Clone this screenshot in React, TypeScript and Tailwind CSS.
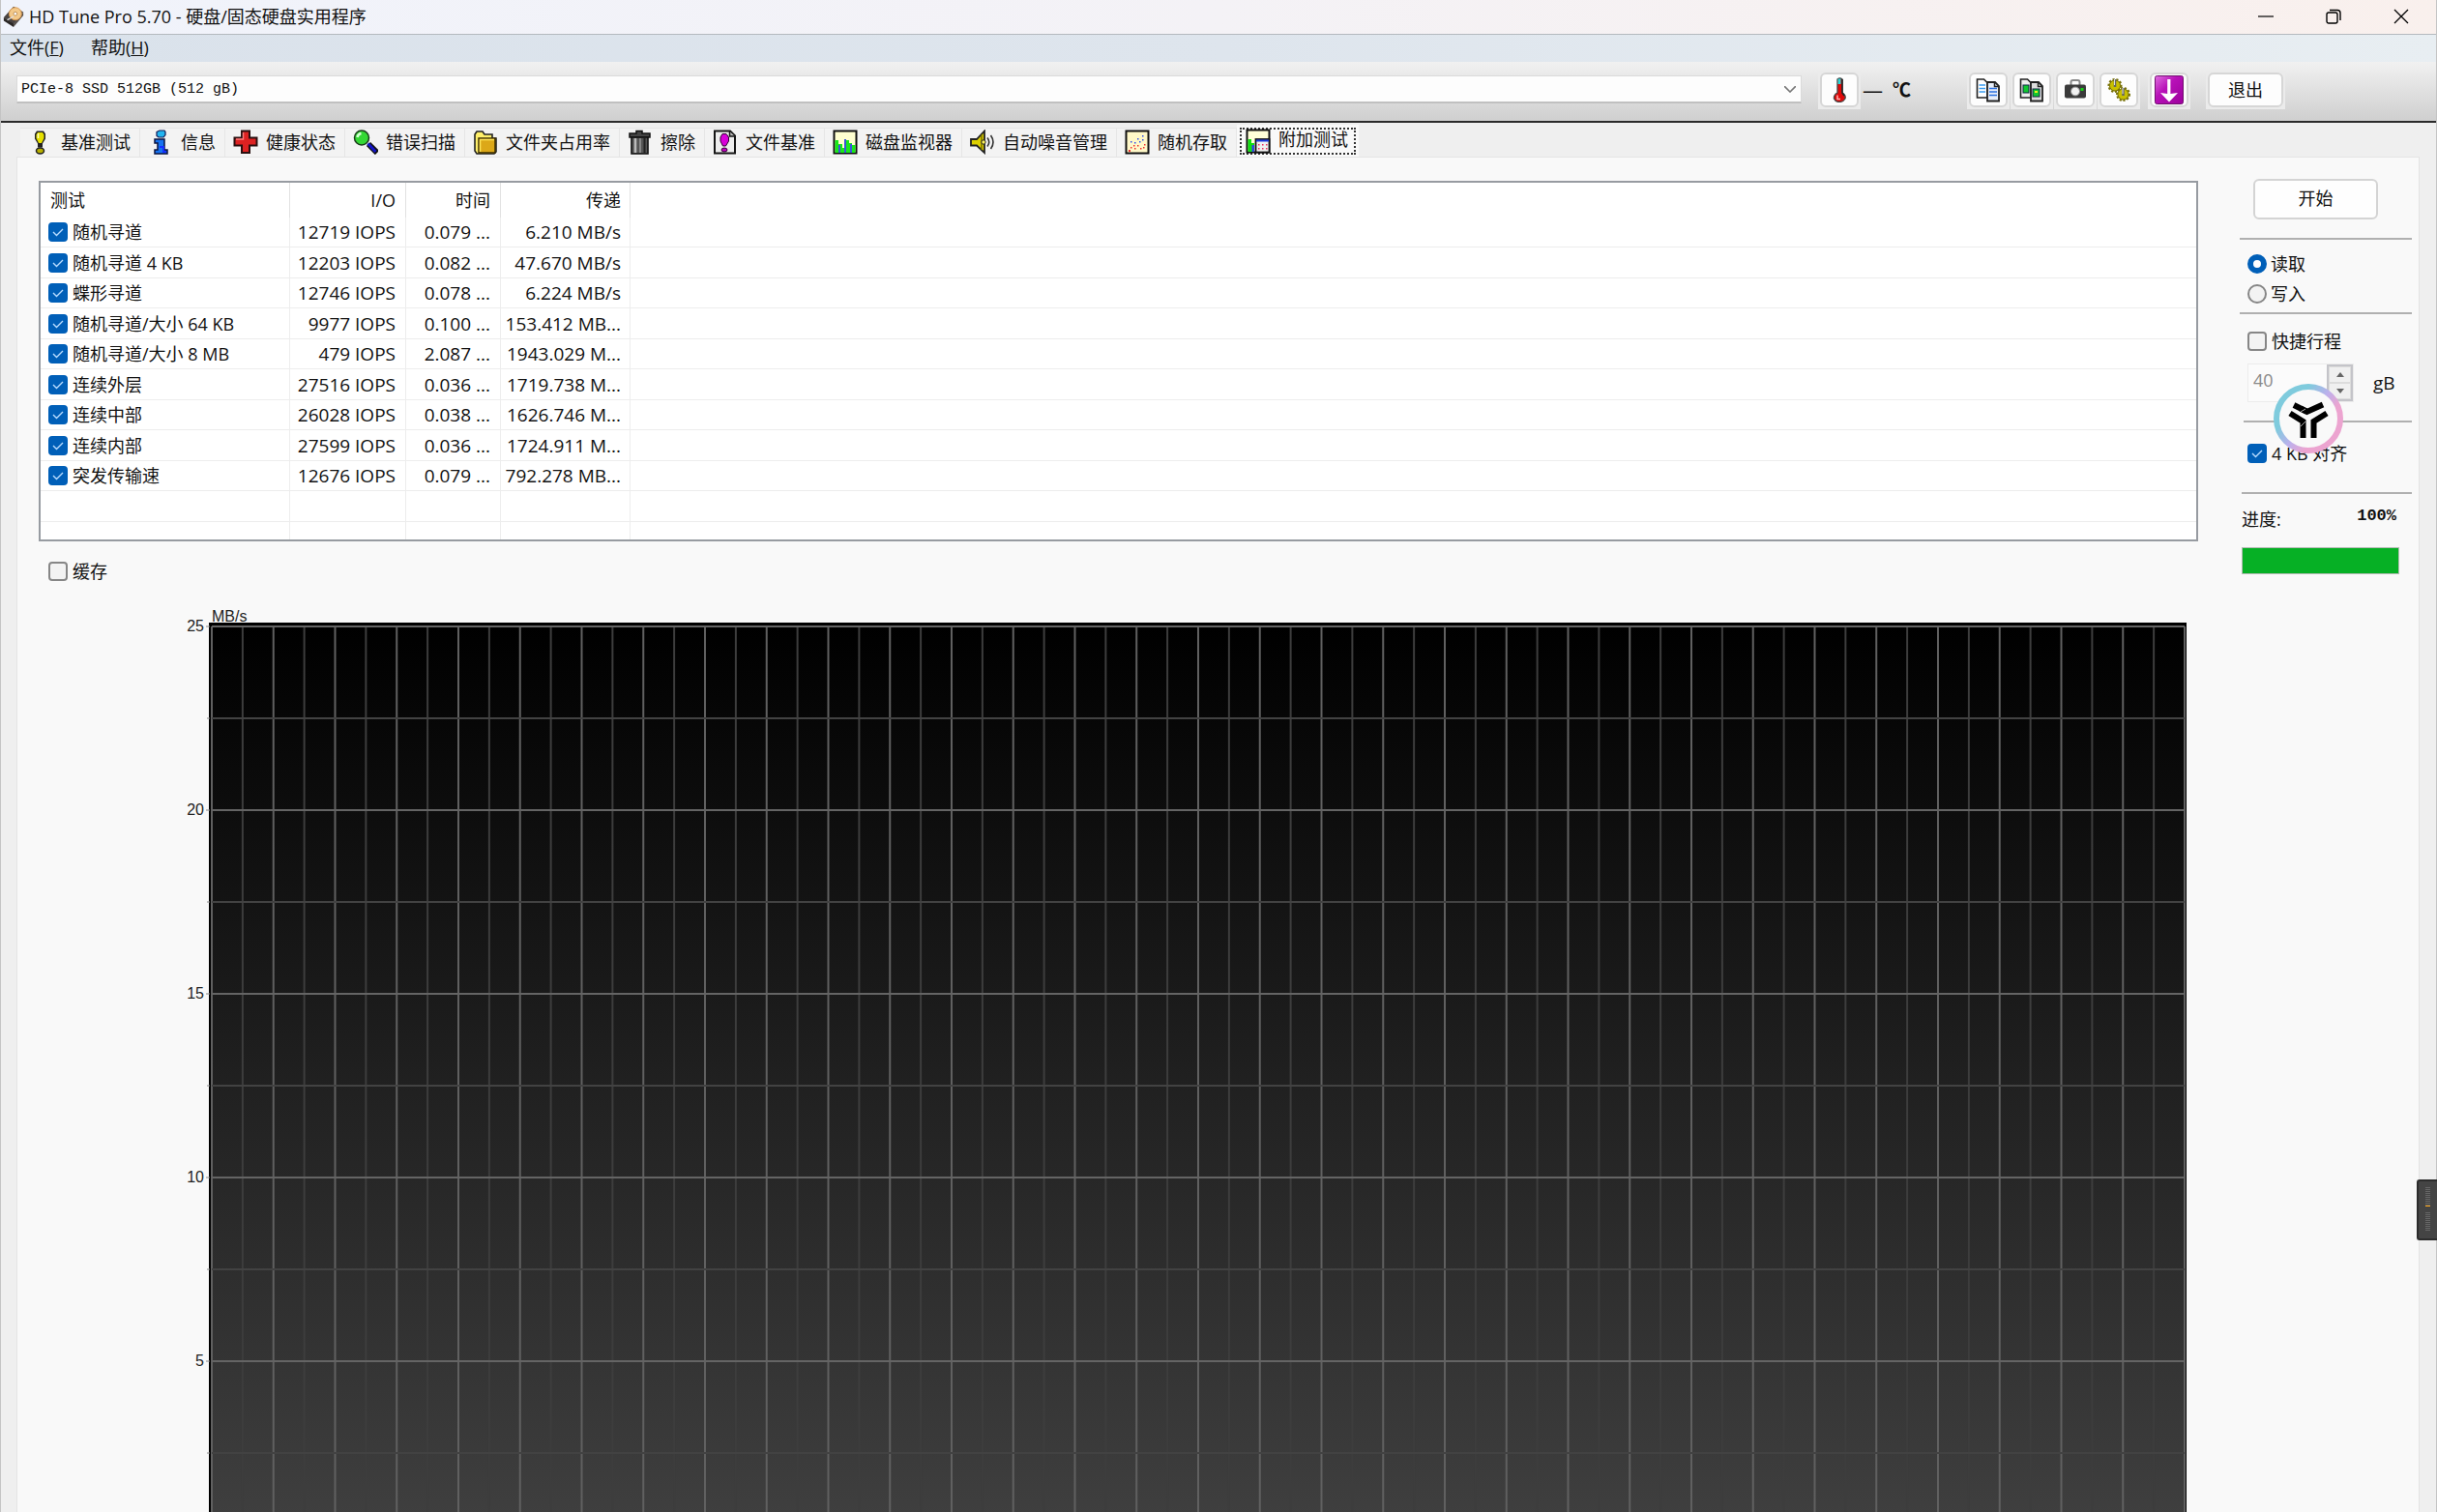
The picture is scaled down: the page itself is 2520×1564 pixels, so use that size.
import React from "react";

type IconProps = { children: React.ReactNode; size?: string };
const Icon = ({ children, size = "size-[26px]" }: IconProps) => (
  <svg viewBox="0 0 26 26" className={`${size} shrink-0`} aria-hidden="true">
    {children}
  </svg>
);

const AppIcon = () => (
  <Icon size="size-[24px]">
    <path d="M2 14 13 2l11 6-11 14z" fill="#4a4442" />
    <path d="M2 14v4l11 7V21z" fill="#2b2725" />
    <path d="m13 21 11-13v4L13 25z" fill="#57504c" />
    <ellipse cx="15" cy="10" rx="7" ry="7" fill="#f3c98a" stroke="#d8954a" />
    <circle cx="15" cy="10" r="2" fill="#fff" stroke="#b98a52" />
    <path d="M6 17l7-4" stroke="#ddd" strokeWidth="1.5" />
  </Icon>
);
const BenchIcon = () => (
  <Icon>
    <path d="M9 1.500h7l2 3v5l-3 5v4h-5v-4l-3-5v-5z" fill="#222" />
    <path d="M10 3h5l1.500 2.500V9L14 14h-3L8.500 9V5.500z" fill="#e6e000" />
    <path d="M10.500 4v5" stroke="#ffffc0" strokeWidth="1.500" />
    <ellipse cx="12.500" cy="22" rx="4" ry="3" fill="#b8b000" stroke="#222" strokeWidth="1.500" />
  </Icon>
);
const InfoIcon = () => (
  <Icon>
    <path d="M9 2.500 12 1h5l1 1.500v3L16 8h-5L9 6.500z" fill="#22b4f0" stroke="#111a55" strokeWidth="1.200" />
    <path d="M7 10h10v11h3v4H7v-4h3v-7H7z" fill="#1672f0" stroke="#0a1340" strokeWidth="1.500" />
    <path d="M12 18h4v5h3" fill="none" stroke="#1530ff" strokeWidth="2" />
  </Icon>
);
const HealthIcon = () => (
  <Icon>
    <path d="M9 1.500h8v7h7.500v8H17V24H9v-7.500H1.500v-8H9z" fill="#dd2222" stroke="#2a1010" strokeWidth="2" />
    <path d="M10.500 3v7H3" fill="none" stroke="#ff7a7a" strokeWidth="1.500" />
  </Icon>
);
const ScanIcon = () => (
  <Icon>
    <path d="m16 15 9 9" stroke="#111" strokeWidth="6" />
    <path d="m15.500 14.500 8 8.500" stroke="#1414c8" strokeWidth="3" />
    <circle cx="9" cy="8.500" r="7.500" fill="#35d835" stroke="#1b3d1b" strokeWidth="1.500" />
    <path d="M4.500 8a5 5 0 0 1 4-4" stroke="#d5ffd5" strokeWidth="2.500" fill="none" />
  </Icon>
);
const FolderIcon = () => (
  <Icon>
    <path d="M2 5 4 2h6l2 3h8v4h4v14l-2 2H4l-2-3z" fill="#fff06a" stroke="#222" strokeWidth="1.600" />
    <rect x="6" y="9" width="17" height="15" fill="#dca818" stroke="#3a2c00" strokeWidth="1.500" />
    <path d="M7.500 23V10.500H22" fill="none" stroke="#ffe55a" strokeWidth="1.500" />
  </Icon>
);
const TrashIcon = () => (
  <Icon>
    <path d="M2 4h7V1.500h6V4h8v4H2z" fill="#444" stroke="#111" strokeWidth="1.500" />
    <path d="M4 8h17v17H4z" fill="#555" stroke="#111" strokeWidth="1.600" />
    <path d="M8 9v15" stroke="#bbb" strokeWidth="2.500" />
    <path d="M13 9v15" stroke="#888" strokeWidth="2" />
    <path d="M17.500 9v15" stroke="#222" strokeWidth="2" />
  </Icon>
);
const FileBenchIcon = () => (
  <Icon>
    <path d="M2 1.500h16l5 5V24.500H2z" fill="#eee" stroke="#151515" strokeWidth="2" />
    <path d="M17.500 2v5H23" fill="#bbb" stroke="#151515" strokeWidth="1.500" />
    <path d="M10 4.500h4l2.500 3.500v4L13.500 17h-3L8 12V8z" fill="#d800d8" stroke="#300030" />
    <ellipse cx="12" cy="21" rx="3" ry="2" fill="#c000c0" stroke="#300030" />
  </Icon>
);
const MonitorIcon = () => (
  <Icon>
    <rect x="1.500" y="1.500" width="23" height="23" fill="#ffffd0" stroke="#111" strokeWidth="2" />
    <path d="M2.500 24V11H6v4h4v4h2v-8h5v3h3v2h3.500v8z" fill="#18e818" />
    <path d="M6 24v-8h2v8zM12 24V10h2v14zM18 24v-9h2v9z" fill="#3a55d8" />
  </Icon>
);
const SpeakerIcon = () => (
  <Icon>
    <path d="M1 10h6l8-8.500V24l-8-7.500H1z" fill="#ddd000" stroke="#222" strokeWidth="1.800" />
    <path d="M12 5v16" stroke="#777000" strokeWidth="1.500" />
    <circle cx="14" cy="13" r="2.200" fill="#fff45a" stroke="#222" />
    <path d="M18 8.500q3.500 4.500 0 9M21.500 6q5 7 0 14" fill="none" stroke="#333" strokeWidth="1.600" />
  </Icon>
);
const RandomIcon = () => (
  <Icon>
    <rect x="1.500" y="1.500" width="23" height="23" fill="#fff8c8" stroke="#111" strokeWidth="2" />
    <path d="M6 12h1.500v1.500H6zM10 13h1.500v1.500H10zM13 9h1.500v1.500H13zM18 6h1.500v1.500H18zM15 12h1.500v1.500H15zM18 10h1.500v1.500H18z" fill="#3050e8" />
    <path d="M4 21h2v2H4zM6 18h1.500v1.500H6zM10 19h1.500v1.500H10zM13 16h1.500v1.500H13zM16 19h1.500v1.500H16zM20 15h1.500v1.500H20zM19 18h1.500v1.500H19zM9 16h1.500v1.500H9z" fill="#f03030" />
  </Icon>
);
const ExtraIcon = () => (
  <Icon>
    <rect x="1.500" y="1.500" width="23" height="23" fill="#ffffd8" stroke="#111" strokeWidth="2" />
    <path d="M2.500 24V11H6v4h3v9z" fill="#10e010" />
    <path d="M6.500 24v-7H9v7z" fill="#3048e0" />
    <rect x="10.500" y="11" width="14" height="13.500" fill="#f0f0f0" stroke="#111" strokeWidth="1.800" />
    <path d="M11 12.500h13" stroke="#1838e0" strokeWidth="2" />
    <path d="M13 16h1.500v1.500H13zM17 16h1.500v1.500H17zM21 16h1.500v1.500H21zM13 20h1.500v1.500H13zM17 20h1.500v1.500H17zM21 20h1.500v1.500H21z" fill="#e83060" />
  </Icon>
);

const ThermoIcon = () => (
  <Icon>
    <path d="M11 2q2.500-2 5 0v14q4 2 3 6-2 3.500-6 3.500T7.500 22q-.500-4 3.500-6z" fill="#e00808" stroke="#444" strokeWidth="1.300" />
    <path d="M11.500 1.500h3V7h-3z" fill="#28d8d8" />
    <path d="M16 2v14l2 3" stroke="#222" strokeWidth="1.500" fill="none" />
    <path d="M11 18.500v4h3" stroke="#ffb0b0" strokeWidth="1.500" fill="none" />
  </Icon>
);
const pagePath = "M1.500 2h7l3.500 3.500V21H1.500z";
const pagePath2 = "M12 5h8l4 4v15.500H12z";
const CopyTextIcon = () => (
  <Icon>
    <path d={pagePath} fill="#fff" stroke="#222" strokeWidth="1.600" />
    <path d="M3.500 8H10M3.500 11.500H10M3.500 15H10" stroke="#3a9cf0" strokeWidth="1.500" />
    <path d={pagePath2} fill="#e8eef8" stroke="#222" strokeWidth="1.800" />
    <path d="M14 11.500h8M14 15h8M14 18.500h8" stroke="#2a70e0" strokeWidth="1.500" />
    <path d="M19.500 5v4.500H24" fill="none" stroke="#222" strokeWidth="1.500" />
  </Icon>
);
const CopyImageIcon = () => (
  <Icon>
    <path d={pagePath} fill="#eee" stroke="#222" strokeWidth="1.600" />
    <rect x="4" y="8" width="6" height="8" fill="#10c830" stroke="#124" />
    <path d={pagePath2} fill="#ddd" stroke="#222" strokeWidth="1.800" />
    <rect x="14" y="12" width="7" height="8" fill="#10c830" stroke="#124" />
    <path d="M16 14h3v2h-3z" fill="#e8f020" />
    <path d="M19.500 5v4.500H24" fill="none" stroke="#222" strokeWidth="1.500" />
  </Icon>
);
const CameraIcon = () => (
  <Icon>
    <path d="M8.500 8V5q0-2 2-2h5q2 0 2 2v3" fill="none" stroke="#888" strokeWidth="2" />
    <rect x="2" y="7.500" width="22" height="14" rx="2" fill="#3a3a3a" />
    <circle cx="13" cy="14.500" r="4.500" fill="#f2f2f2" stroke="#888" />
    <rect x="18.500" y="11" width="3" height="3" fill="#18d018" />
  </Icon>
);
const GearsIcon = () => (
  <Icon>
    <g fill="#c8c000" stroke="#77700a">
      <circle cx="9" cy="8.500" r="6" strokeWidth="3" strokeDasharray="2 1.600" />
      <circle cx="9" cy="8.500" r="5.500" strokeWidth="1" />
      <circle cx="17.500" cy="17.500" r="6" strokeWidth="3" strokeDasharray="2 1.600" />
      <circle cx="17.500" cy="17.500" r="5.500" strokeWidth="1" />
    </g>
    <path d="M9 2v8M17.500 11v8" stroke="#666" strokeWidth="2.500" />
    <path d="M8.500 2v6M17 11v6" stroke="#ddd" strokeWidth="1" />
  </Icon>
);
const DownIcon = () => (
  <svg viewBox="0 0 30 30" className="size-[30px] shrink-0" aria-hidden="true">
    <defs>
      <linearGradient id="down" x1="0" y1="0" x2="1" y2="1">
        <stop offset="0" stopColor="#e070e0" />
        <stop offset="0.400" stopColor="#b812b8" />
        <stop offset="1" stopColor="#9c009c" />
      </linearGradient>
    </defs>
    <rect x="0.500" y="0.500" width="29" height="29" rx="2" fill="url(#down)" stroke="#70106e" />
    <path d="M13.200 4h3.200v15l7.600-1-9 9.500L6 18l7.200 1z" fill="#fff" />
  </svg>
);

const Logo = () => (
  <svg viewBox="0 0 72 72" className="absolute left-[35px] top-[234px] size-[72px]" aria-hidden="true">
    <defs>
      <linearGradient id="ring" x1="0.100" y1="0.200" x2="0.900" y2="0.800">
        <stop offset="0.200" stopColor="#7fcbdd" />
        <stop offset="0.500" stopColor="#bcb0ec" />
        <stop offset="0.750" stopColor="#eca4d0" />
      </linearGradient>
    </defs>
    <circle cx="36" cy="36" r="33" fill="#f9f9f9" stroke="url(#ring)" strokeWidth="6" />
    <g fill="none" stroke="#000" strokeWidth="6">
      <path d="m21 22 13 6.500" />
      <path d="M28 25.500 34.500 29 51 21.500" />
      <path d="m17 30.500 13.500 8.500v17" />
      <path d="M55 30.500 41.500 39v17" />
    </g>
    <path d="m28 29 5-3M28 44l5-5" stroke="#aaa" strokeWidth="1" />
  </svg>
);

const Check = ({ label, checked }: { label: string; checked?: boolean }) => (
  <label className="flex items-center gap-[5px] whitespace-nowrap">
    <span className="grid size-[20px] shrink-0">
      <input
        type="checkbox"
        defaultChecked={checked}
        className="peer col-start-1 row-start-1 size-[20px] appearance-none rounded-[4px] border-2 border-[#868686] bg-[#f3f3f3] checked:border-[#005fb8] checked:bg-[#005fb8]"
      />
      <svg viewBox="0 0 20 20" className="pointer-events-none col-start-1 row-start-1 hidden size-[20px] peer-checked:block" aria-hidden="true">
        <path d="m5 10 3.500 3.500L15 7" fill="none" stroke="#b8dcff" strokeWidth="1.400" />
      </svg>
    </span>
    {label}
  </label>
);

const Radio = ({ label, checked }: { label: string; checked?: boolean }) => (
  <label className="flex h-[31px] items-center gap-[4px]">
    <input
      type="radio"
      name="mode"
      defaultChecked={checked}
      className="size-[20px] appearance-none rounded-full border-2 border-[#868686] bg-[#f3f3f3] checked:border-[6px] checked:border-[#005fb8] checked:bg-white"
    />
    {label}
  </label>
);

const ToolButton = ({ label, wide, children }: { label: string; wide?: boolean; children: React.ReactNode }) => (
  <span className="shrink-0 bg-[#ebebeb] p-[2px]">
    <button
      type="button"
      aria-label={label}
      className={`${wide ? "w-[78px]" : "w-[40px]"} flex h-[36px] items-center justify-center rounded-[6px] border-2 border-[#d6d6d6] bg-[#fdfdfd]`}
    >
      {children}
    </button>
  </span>
);

const tabs: [string, () => React.ReactElement][] = [
  ["基准测试", BenchIcon],
  ["信息", InfoIcon],
  ["健康状态", HealthIcon],
  ["错误扫描", ScanIcon],
  ["文件夹占用率", FolderIcon],
  ["擦除", TrashIcon],
  ["文件基准", FileBenchIcon],
  ["磁盘监视器", MonitorIcon],
  ["自动噪音管理", SpeakerIcon],
  ["随机存取", RandomIcon],
];

const rows = [
  ["随机寻道", "12719 IOPS", "0.079 ...", "6.210 MB/s"],
  ["随机寻道 4 KB", "12203 IOPS", "0.082 ...", "47.670 MB/s"],
  ["蝶形寻道", "12746 IOPS", "0.078 ...", "6.224 MB/s"],
  ["随机寻道/大小 64 KB", "9977 IOPS", "0.100 ...", "153.412 MB..."],
  ["随机寻道/大小 8 MB", "479 IOPS", "2.087 ...", "1943.029 M..."],
  ["连续外层", "27516 IOPS", "0.036 ...", "1719.738 M..."],
  ["连续中部", "26028 IOPS", "0.038 ...", "1626.746 M..."],
  ["连续内部", "27599 IOPS", "0.036 ...", "1724.911 M..."],
  ["突发传输速", "12676 IOPS", "0.079 ...", "792.278 MB..."],
  ["", "", "", ""],
  ["", "", "", ""],
];

const Results = () => (
  <div className="h-[373px] overflow-hidden border-2 border-[#979ba1] bg-white">
    <table className="w-full table-fixed border-separate border-spacing-0">
      <colgroup>
        <col className="w-[258px]" />
        <col className="w-[120px]" />
        <col className="w-[98px]" />
        <col className="w-[134px]" />
        <col />
      </colgroup>
      <thead>
        <tr className="h-9 *:border-r *:border-[#e2e2e2] *:p-0 *:font-normal">
          <th className="pl-[10px]! text-left">测试</th>
          <th className="pr-[10px]! text-right">I/O</th>
          <th className="pr-[10px]! text-right">时间</th>
          <th className="pr-[9px]! text-right">传递</th>
          <td className="border-r-0!" />
        </tr>
      </thead>
      <tbody>
        {rows.map(([name, io, time, rate], i) => (
          <tr key={i} className="h-8 odd:h-[31px] *:border-r *:border-b *:border-[#ededed] *:p-0 *:leading-[30px]">
            <td className="pl-2!">{name && <Check label={name} checked />}</td>
            <td className="pr-[10px]! text-right text-[19px]">{io}</td>
            <td className="pr-[10px]! text-right text-[19px]">{time}</td>
            <td className="pr-[9px]! text-right text-[19px]">{rate}</td>
            <td className="border-r-0!" />
          </tr>
        ))}
      </tbody>
    </table>
  </div>
);

const Chart = () => (
  <div className="mr-3 grid grid-cols-[171px_1fr] gap-x-[5px] font-['Liberation_Sans',sans-serif] text-[16px] leading-4 text-[#222]">
    <div className="col-start-2 h-[14px] pl-[3px]">MB/s</div>
    <div className="-mt-1 text-right">
      {[25, 20, 15, 10, 5].map((v) => (
        <div key={v} className="h-[190px]">{v}</div>
      ))}
    </div>
    <div className="border-t-4 border-r-2 border-l-3 border-black bg-linear-to-b/srgb from-black to-[#414141]">
      <svg className="h-[950px] w-full overflow-visible" role="img" aria-label="MB/s">
        {Array.from({ length: 65 }, (_, i) => (
          <line key={i} x1={`${(i * 100) / 64}%`} x2={`${(i * 100) / 64}%`} y1="0" y2="950" stroke={i % 2 ? "#3d3d3d" : "#606060"} strokeWidth="2" />
        ))}
        {Array.from({ length: 10 }, (_, i) => (
          <g key={i} stroke={i % 2 ? "#424242" : "#646464"} strokeWidth="2">
            <line x1="0" x2="100%" y1={i * 95} y2={i * 95} />
            <line x1={i % 2 ? -5 : -6} x2="-2" y1={i * 95} y2={i * 95} stroke="#888" strokeWidth="1" />
          </g>
        ))}
      </svg>
    </div>
  </div>
);

const Rule = ({ className }: { className: string }) => <hr className={`${className} border-t-2 border-[#b0b0b0]`} />;

const Sidebar = () => (
  <aside className="relative flex w-[178px] shrink-0 flex-col">
    <button type="button" className="mt-[22px] ml-[14px] h-[42px] w-[129px] rounded-[6px] border-2 border-[#d4d4d4] bg-[#fefefe] pb-[2px]">开始</button>
    <Rule className="mt-[19px]" />
    <div className="mt-[9px] mb-px pl-2">
      <Radio label="读取" checked />
      <Radio label="写入" />
    </div>
    <Rule className="mt-[3px]" />
    <div className="mt-3 flex h-[31px] items-center pl-2">
      <Check label="快捷行程" />
    </div>
    <div className="mt-2 flex items-center pl-2">
      <div className="flex h-[40px] w-[110px] border border-[#ececec] bg-[#fbfbfb]">
        <input aria-label="快捷行程 gB" disabled defaultValue="40" className="min-w-0 flex-1 pb-[6px] pl-[5px] text-[#8a8a8a]" />
        <div className="flex w-[27px] flex-col border-2 border-[#c4c4c9]">
          <button type="button" aria-label="增加" className="flex flex-1 items-center justify-center border border-[#dcdcdc] bg-[#f0f0f0]">
            <svg viewBox="0 0 8 5" className="h-[5px] w-2"><path d="M0 5 4 0l4 5z" fill="#666" /></svg>
          </button>
          <button type="button" aria-label="减少" className="flex flex-1 items-center justify-center border border-[#dcdcdc] bg-[#f0f0f0]">
            <svg viewBox="0 0 8 5" className="h-[5px] w-2"><path d="m0 0 4 5 4-5z" fill="#666" /></svg>
          </button>
        </div>
      </div>
      <span className="ml-5 text-[19px]">gB</span>
    </div>
    <Rule className="mt-[19px] ml-1" />
    <div className="mt-4 flex h-[31px] items-center pl-2">
      <Check label="4 KB 对齐" checked />
    </div>
    <Rule className="mt-[25px] ml-[2px]" />
    <div className="mt-3 flex h-7 items-center justify-between pr-4 pl-[2px]">
      <span>进度:</span>
      <span className="pb-[6px] font-['Liberation_Mono',monospace] text-[17px] font-bold">100%</span>
    </div>
    <div role="progressbar" aria-label="进度" aria-valuenow={100} className="mt-[15px] mr-[13px] ml-[2px] h-7 border border-[#b5bcb5] bg-[#06b025]" />
    <Logo />
  </aside>
);

const TitleBar = () => (
  <header className="flex h-9 shrink-0 items-center border-b border-[#b4b9be] bg-linear-to-r from-[#f0f3fb] via-[#f4f2f6] to-[#f9f0ed] pb-[2px] pl-px">
    <AppIcon />
    <h1 className="flex-1 pl-1">HD Tune Pro 5.70 - 硬盘/固态硬盘实用程序</h1>
    <div className="flex gap-[54px] pr-[28px]">
      <button type="button" aria-label="最小化">
        <svg viewBox="0 0 16 16" className="size-4"><path d="M0 8h16" stroke="#000" strokeWidth="1.200" /></svg>
      </button>
      <button type="button" aria-label="还原">
        <svg viewBox="0 0 16 16" className="size-4" fill="none" stroke="#000" strokeWidth="1.400">
          <rect x="1" y="4" width="11" height="11" rx="2" />
          <path d="M4 1.500h8q3 0 3 3V12" />
        </svg>
      </button>
      <button type="button" aria-label="关闭">
        <svg viewBox="0 0 16 16" className="size-4"><path d="m1 1 14 14M15 1 1 15" stroke="#000" strokeWidth="1.300" /></svg>
      </button>
    </div>
  </header>
);

const Toolbar = () => (
  <div className="flex h-[63px] shrink-0 items-center border-b-2 border-[#2a2a2a] bg-linear-to-b from-[#f1f1f1] to-[#cfcfcf] pr-[156px] pb-1 pl-4">
    <div className="grid flex-1 items-center">
      <select aria-label="硬盘" className="col-start-1 row-start-1 h-[29px] appearance-none border border-b-2 border-[#dadada] border-b-[#c0c0c0] bg-[#fdfdfd] pt-[2px] pl-1 font-['Liberation_Mono',monospace] text-[15px]">
        <option>PCIe-8 SSD 512GB (512 gB)</option>
      </select>
      <svg viewBox="0 0 12 7" className="pointer-events-none col-start-1 row-start-1 mr-[6px] h-[7px] w-3 justify-self-end" aria-hidden="true">
        <path d="m0 0 6 6 6-6" fill="none" stroke="#777" strokeWidth="1.600" />
      </svg>
    </div>
    <div className="ml-[17px] flex w-[154px] items-center">
      <ToolButton label="温度"><ThermoIcon /></ToolButton>
      <span className="ml-[2px] text-[21px]">—</span>
      <span className="ml-[10px] text-[19px] font-bold">℃</span>
    </div>
    <div className="flex gap-px">
      <ToolButton label="复制文本"><CopyTextIcon /></ToolButton>
      <ToolButton label="复制图像"><CopyImageIcon /></ToolButton>
      <ToolButton label="截图"><CameraIcon /></ToolButton>
      <ToolButton label="选项"><GearsIcon /></ToolButton>
    </div>
    <div className="ml-2 flex gap-4">
      <ToolButton label="保存"><DownIcon /></ToolButton>
      <ToolButton label="退出" wide>退出</ToolButton>
    </div>
  </div>
);

export default function App() {
  return (
    <div className="flex h-screen flex-col overflow-hidden border-x border-[#c4c4c4] bg-[#efefef] font-['Open_Sans','Noto_Sans_CJK_SC',sans-serif] text-[18px] leading-6 text-[#111]">
      <TitleBar />
      <nav className="flex h-7 shrink-0 items-center gap-7 bg-linear-to-r from-[#dae2eb] via-[#dee5ed] to-[#e8eef2] pb-[2px] pl-[9px]">
        <button type="button">文件(<u>F</u>)</button>
        <button type="button">帮助(<u>H</u>)</button>
      </nav>
      <Toolbar />
      <div role="tablist" className="flex h-[35px] shrink-0 items-end pl-5">
        {tabs.map(([label, TabIcon]) => (
          <button key={label} role="tab" aria-selected="false" type="button" className="flex h-[30px] items-center gap-2 border-t border-r border-[#e6e6e6] bg-[#f3f3f3] pr-[9px] pb-[2px] pl-2 whitespace-nowrap">
            <TabIcon />
            {label}
          </button>
        ))}
        <button role="tab" aria-selected="true" type="button" className="flex h-[33px] items-center bg-[#f9f9f9] px-[3px] whitespace-nowrap">
          <span className="flex h-[28px] items-center gap-2 border-2 border-dotted border-[#333] pr-[6px] pl-1">
            <ExtraIcon />
            <span className="pb-1">附加测试</span>
          </span>
        </button>
      </div>
      <main className="mr-[17px] ml-4 flex min-h-0 flex-1 gap-[43px] overflow-hidden border-x border-t border-[#e4e4e4] bg-[#f9f9f9] pr-[7px] pl-[22px]">
        <section className="min-w-0 flex-1 pt-6">
          <Results />
          <div className="mt-[18px] mb-[26px] flex h-[26px] pl-[10px]">
            <Check label="缓存" />
          </div>
          <Chart />
        </section>
        <Sidebar />
      </main>
      <div className="absolute top-[1220px] right-0 flex h-[63px] w-[21px] flex-col items-center rounded-l-[3px] border-2 border-r-0 border-[#2c2c2c] bg-[#444] pt-[6px]">
        <div className="h-[19px] w-[5px] bg-[repeating-linear-gradient(#666_0_1px,#444_1px_2px)]" />
        <div className="h-px w-[5px] bg-[#ffa818]" />
        <div className="mt-[6px] h-[19px] w-[5px] bg-[repeating-linear-gradient(#666_0_1px,#444_1px_2px)]" />
      </div>
    </div>
  );
}
